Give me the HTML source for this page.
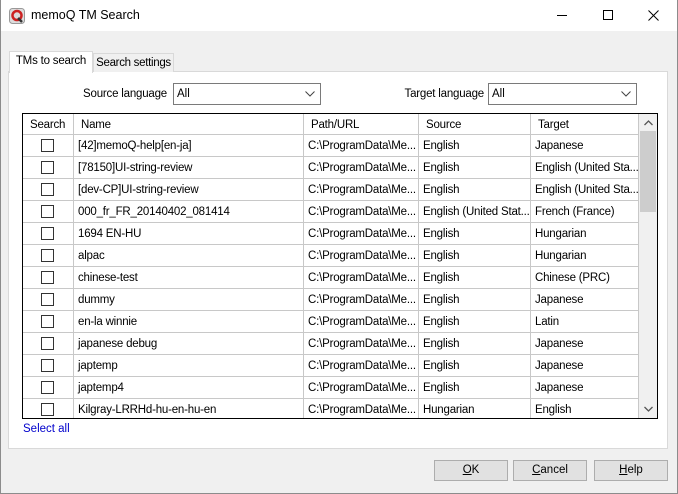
<!DOCTYPE html>
<html><head><style>
*{margin:0;padding:0;box-sizing:border-box}
body{width:678px;height:494px;background:#f0f0f0;font-family:"Liberation Sans",sans-serif;font-size:11.5px;color:#000;position:relative;overflow:hidden}
.a{position:absolute;white-space:nowrap}
.win{left:0;top:0;width:678px;height:494px;border:1px solid #8c8c8c;border-top:none}
.title{left:1px;top:0;width:676px;height:31px;background:#fff}
.grid{left:22px;top:113px;width:636px;height:306px;border:1px solid #000;background:#fff;overflow:hidden}
.row{position:absolute;left:0;height:22px;width:616px;border-bottom:1px solid #c8c8c8}
.c{position:absolute;top:0;height:22px;line-height:22px;border-right:1px solid #c8c8c8;padding-left:4px;white-space:nowrap;overflow:hidden;letter-spacing:-0.2px}
.cb{position:absolute;left:18px;top:4px;width:13px;height:13px;border:1px solid #333;background:#fff}
.btn{position:absolute;top:460px;width:74px;height:21px;background:#e1e1e1;border:1px solid #adadad;text-align:center;line-height:19px}
.combo{position:absolute;top:83px;height:22px;background:#fff;border:1px solid #7a7a7a;line-height:20px;padding-left:3px}
</style></head><body>
<div class="a title"></div>
<div class="a win"></div>
<svg class="a" style="left:9px;top:8px" width="16" height="16" viewBox="0 0 16 16"><rect x="0.5" y="0.5" width="15" height="15" rx="3" fill="#ddd" stroke="#999"/><circle cx="8" cy="7.5" r="4.5" fill="none" stroke="#c22" stroke-width="2.5"/><path d="M9 10l4 4" stroke="#333" stroke-width="2.5"/></svg>
<div class="a" style="left:31px;top:8px;font-size:12.5px">memoQ TM Search</div>
<div class="a" style="left:557px;top:15px;width:10px;height:1px;background:#000"></div>
<div class="a" style="left:603px;top:10px;width:10px;height:10px;border:1px solid #000"></div>
<svg class="a" style="left:648px;top:10px" width="11" height="11"><path d="M0.5 0.5L10.5 10.5M10.5 0.5L0.5 10.5" stroke="#000"/></svg>

<div class="a" style="left:8px;top:71px;width:660px;height:378px;background:#fff;border:1px solid #d9d9d9"></div>
<div class="a" style="left:93px;top:53px;width:81px;height:19px;background:#f0f0f0;border:1px solid #d9d9d9;border-bottom:none;text-align:center;line-height:18px;letter-spacing:-0.3px">Search settings</div>
<div class="a" style="left:9px;top:51px;width:84px;height:22px;background:#fff;border:1px solid #d9d9d9;border-bottom:none;text-align:center;line-height:19px;letter-spacing:-0.2px">TMs to search</div>

<div class="a" style="left:60px;width:107px;text-align:right;top:88px;letter-spacing:-0.2px">Source language</div>
<div class="combo" style="left:173px;width:148px">All</div>
<svg class="a" style="left:305px;top:91px" width="10" height="6"><path d="M0.5 0.5L5 5L9.5 0.5" fill="none" stroke="#444"/></svg>
<div class="a" style="left:380px;width:104px;text-align:right;top:88px;letter-spacing:-0.2px">Target language</div>
<div class="combo" style="left:488px;width:149px">All</div>
<svg class="a" style="left:621px;top:91px" width="10" height="6"><path d="M0.5 0.5L5 5L9.5 0.5" fill="none" stroke="#444"/></svg>

<div class="a grid">
<div class="row" style="top:0;height:21px">
<div class="c" style="left:0;width:51px;padding-left:7px;line-height:22px">Search</div>
<div class="c" style="left:51px;width:230px;padding-left:7px;line-height:22px">Name</div>
<div class="c" style="left:281px;width:115px;padding-left:7px;line-height:22px">Path/URL</div>
<div class="c" style="left:396px;width:112px;padding-left:7px;line-height:22px">Source</div>
<div class="c" style="left:508px;width:108px;padding-left:7px;line-height:22px">Target</div>
</div>
<div id="rows"></div>
<div class="a" style="left:616px;top:0;width:18px;height:306px;background:#f0f0f0"></div>
<div class="a" style="left:617px;top:17px;width:16px;height:81px;background:#cdcdcd"></div>
<svg class="a" style="left:621px;top:6px" width="9" height="6"><path d="M0.5 5L4.5 1L8.5 5" fill="none" stroke="#555" stroke-width="1.3"/></svg>
<svg class="a" style="left:621px;top:292px" width="9" height="6"><path d="M0.5 1L4.5 5L8.5 1" fill="none" stroke="#555" stroke-width="1.3"/></svg>
</div>
<script>
var d=[["[42]memoQ-help[en-ja]","English","Japanese"],["[78150]UI-string-review","English","English (United Sta..."],["[dev-CP]UI-string-review","English","English (United Sta..."],["000_fr_FR_20140402_081414","English (United Stat...","French (France)"],["1694 EN-HU","English","Hungarian"],["alpac","English","Hungarian"],["chinese-test","English","Chinese (PRC)"],["dummy","English","Japanese"],["en-la winnie","English","Latin"],["japanese debug","English","Japanese"],["japtemp","English","Japanese"],["japtemp4","English","Japanese"],["Kilgray-LRRHd-hu-en-hu-en","Hungarian","English"]];
var h="";d.forEach(function(r,i){h+='<div class="row" style="top:'+(21+i*22)+'px"><div class="c" style="left:0;width:51px"><div class="cb"></div></div><div class="c" style="left:51px;width:230px">'+r[0]+'</div><div class="c" style="left:281px;width:115px">C:\\ProgramData\\Me...</div><div class="c" style="left:396px;width:112px">'+r[1]+'</div><div class="c" style="left:508px;width:108px">'+r[2]+'</div></div>';});
document.getElementById("rows").outerHTML=h;
</script>
<div class="a" style="left:23px;top:423px;color:#0000cc">Select all</div>

<div class="btn" style="left:434px"><u>O</u>K</div>
<div class="btn" style="left:513px"><u>C</u>ancel</div>
<div class="btn" style="left:594px"><u>H</u>elp</div>
</body></html>
